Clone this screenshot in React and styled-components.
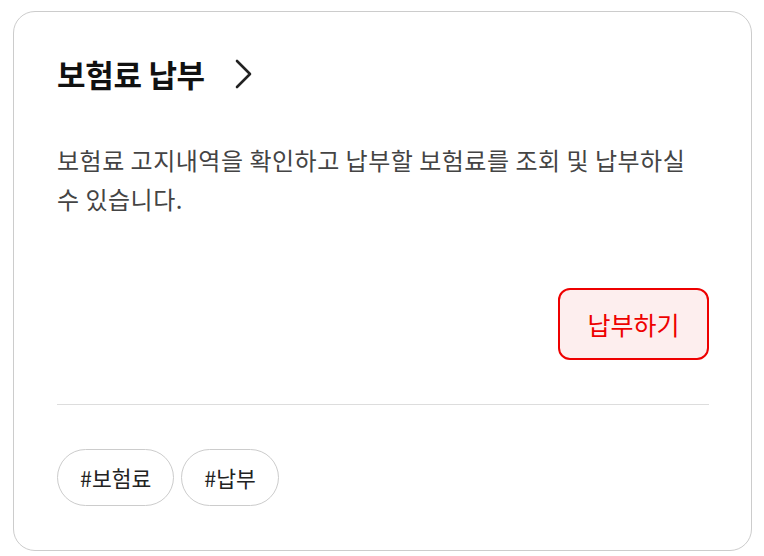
import React from 'react';
import styled, { createGlobalStyle } from 'styled-components';

const GlobalStyle = createGlobalStyle`
  html, body {
    margin: 0;
    padding: 0;
    background: #ffffff;
  }
  body {
    font-family: "Noto Sans CJK KR", "Noto Sans", sans-serif;
  }
`;

const Page = styled.div`
  padding: 11px 0 0 13px;
`;

const Card = styled.section`
  box-sizing: border-box;
  width: 739px;
  height: 540px;
  border: 1px solid #cccccc;
  border-radius: 22px;
  padding: 40px 42px 0 43px;
  display: flex;
  flex-direction: column;
`;

const TitleRow = styled.a`
  display: flex;
  align-items: center;
  gap: 28px;
  color: #111111;
  text-decoration: none;
  cursor: pointer;
`;

const Title = styled.h2`
  margin: 0;
  font-size: 31px;
  line-height: 44px;
  font-weight: 700;
  letter-spacing: -0.3px;
`;

const Description = styled.p`
  margin: 44px 0 0;
  font-size: 24px;
  line-height: 39px;
  color: #444444;
  letter-spacing: 0.5px;
`;

const Actions = styled.div`
  display: flex;
  justify-content: flex-end;
  margin-top: 70px;
`;

const PayButton = styled.button`
  box-sizing: border-box;
  width: 151px;
  height: 72px;
  border: 2px solid #ee0000;
  border-radius: 12px;
  background: #fdeeee;
  color: #ee0000;
  font-family: inherit;
  font-size: 25px;
  cursor: pointer;
`;

const Divider = styled.hr`
  margin: 44px 0 0;
  border: 0;
  border-top: 1px solid #dddddd;
`;

const Tags = styled.div`
  display: flex;
  gap: 7px;
  margin-top: 44px;
`;

const Tag = styled.span`
  box-sizing: border-box;
  height: 57px;
  padding: 0 22px;
  display: inline-flex;
  align-items: center;
  border: 1px solid #cccccc;
  border-radius: 29px;
  font-size: 21.5px;
  color: #222222;
`;

const Chevron = () => (
  <svg width="20" height="30" viewBox="0 0 20 30" fill="none">
    <path d="M4 2 L17 15 L4 28" stroke="#222" strokeWidth="2.6" strokeLinecap="round" strokeLinejoin="round" />
  </svg>
);

export default function App() {
  return (
    <Page>
      <GlobalStyle />
      <Card>
        <TitleRow>
          <Title>보험료 납부</Title>
          <Chevron />
        </TitleRow>
        <Description>
          보험료 고지내역을 확인하고 납부할 보험료를 조회 및 납부하실 수 있습니다.
        </Description>
        <Actions>
          <PayButton>납부하기</PayButton>
        </Actions>
        <Divider />
        <Tags>
          <Tag>#보험료</Tag>
          <Tag>#납부</Tag>
        </Tags>
      </Card>
    </Page>
  );
}
